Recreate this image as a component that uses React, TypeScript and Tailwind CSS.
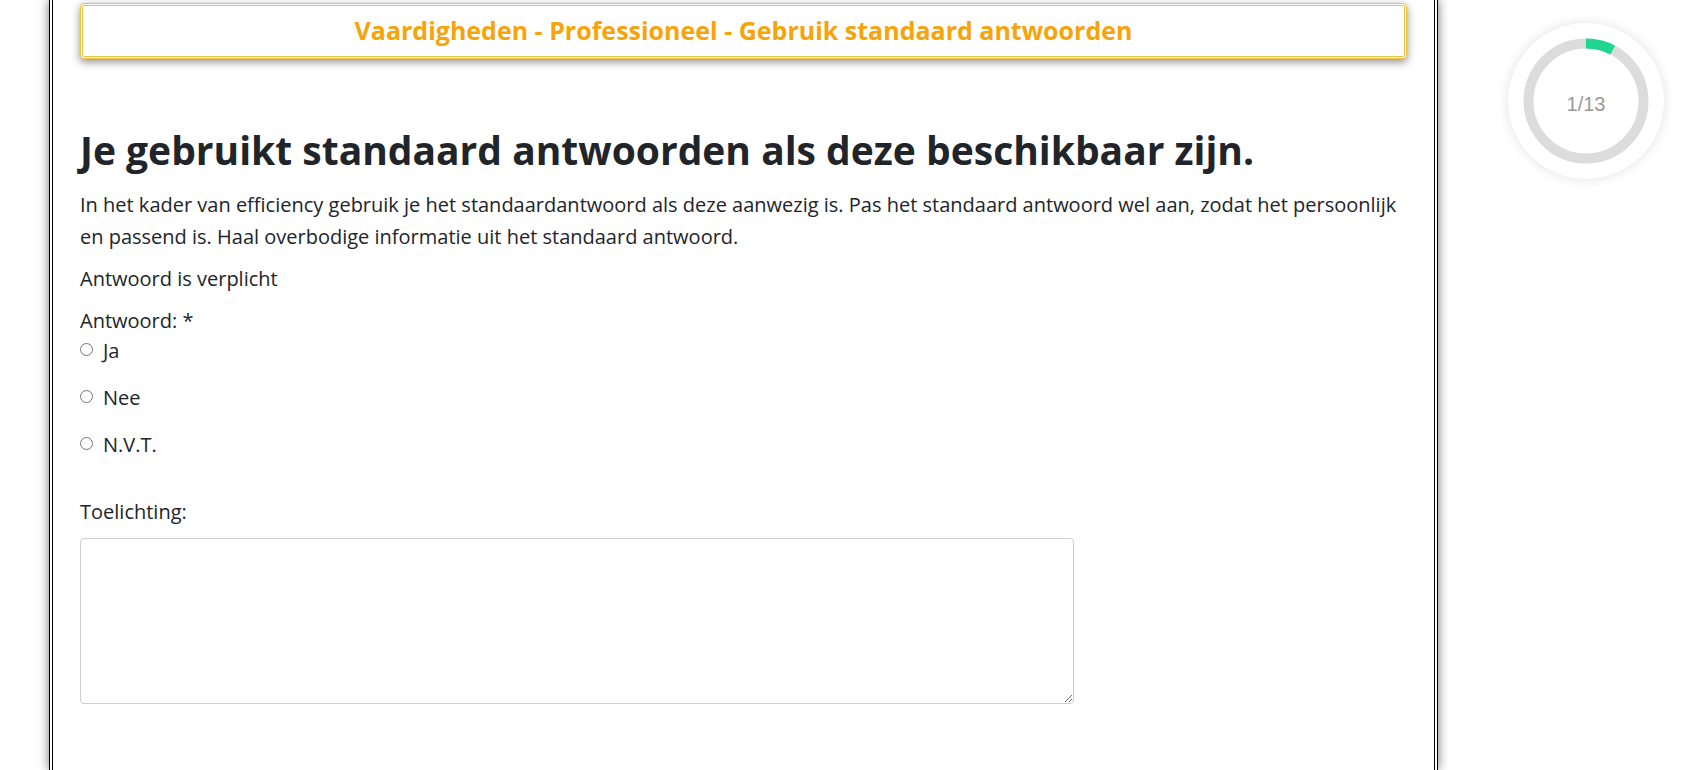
import React from "react";

function Progress() {
  const r = 57.5;
  const c = 2 * Math.PI * r;
  const dash = c / 13;
  return (
    <div className="ml-[70px] mt-[23px] h-[156px] w-[156px] shrink-0 rounded-full bg-white shadow-[0_0_12px_rgba(0,0,0,0.12)] flex items-center justify-center relative">
      <svg width="126" height="126" viewBox="0 0 126 126" className="absolute left-[15px] top-[15px]">
        <circle cx="63" cy="63" r={r} fill="none" stroke="#dcdcdc" strokeWidth="10" />
        <circle
          cx="63"
          cy="63"
          r={r}
          fill="none"
          stroke="#1fd68e"
          strokeWidth="10"
          strokeDasharray={`${dash} ${c}`}
          transform="rotate(-90 63 63)"
        />
      </svg>
      <span className="relative mt-[6px] text-[20px] text-[#999999] font-['Liberation_Sans',Arial,sans-serif]">1/13</span>
    </div>
  );
}

function Radio({ label }: { label: string }) {
  return (
    <label className="flex items-center leading-[27px]">
      <input type="radio" name="antwoord" className="m-0 mr-[10px] h-[13px] w-[13px] -mt-[3px]" />
      <span>{label}</span>
    </label>
  );
}

export default function App() {
  return (
    <div className="min-h-[770px] w-[1687px] bg-white overflow-hidden font-['Open_Sans',sans-serif] text-[#212529]">
      <div className="flex items-start">
        <div className="ml-[49px] w-[1389px] h-[770px] shrink-0 border-x-4 border-double border-black bg-white shadow-[0_0_10px_rgba(0,0,0,0.55)] px-[27px]">
          <div className="mt-[3px] h-[56px] rounded-[4px] border-[3px] border-double border-[#f0bf45] bg-white shadow-[0_3px_8px_rgba(0,0,0,0.45)] flex items-center justify-center">
            <span className="text-[25px] font-bold text-[#f7a30a]">Vaardigheden - Professioneel - Gebruik standaard antwoorden</span>
          </div>
          <h1 className="mt-[67px] text-[39px] leading-[47px] font-bold text-[#212529]">
            Je gebruikt standaard antwoorden als deze beschikbaar zijn.
          </h1>
          <p className="mt-[16px] text-[20px] leading-[32px]">
            In het kader van efficiency gebruik je het standaardantwoord als deze aanwezig is. Pas het standaard antwoord wel aan, zodat het persoonlijk en passend is. Haal overbodige informatie uit het standaard antwoord.
          </p>
          <div className="mt-[12px] text-[20px] leading-[27px]">Antwoord is verplicht</div>
          <div className="mt-[15px] text-[20px] leading-[27px]">Antwoord: *</div>
          <div className="mt-[3px] flex flex-col gap-[20px] text-[20px]">
            <Radio label="Ja" />
            <Radio label="Nee" />
            <Radio label="N.V.T." />
          </div>
          <div className="mt-[40px] text-[20px] leading-[27px]">Toelichting:</div>
          <textarea className="mt-[13px] block h-[166px] w-[994px] rounded-[4px] border border-[#cfcfcf] bg-white outline-none" />
        </div>
        <Progress />
      </div>
    </div>
  );
}
